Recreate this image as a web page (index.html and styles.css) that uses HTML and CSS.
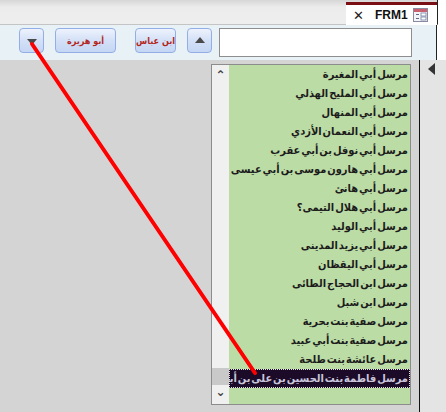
FILE: index.html
```html
<!DOCTYPE html>
<html lang="ar">
<head>
  <meta charset="UTF-8">
  <title>FRM1</title>
  <link rel="stylesheet" href="styles.css">
</head>
<body>
  <div class="header">
    <div class="tabbar">
      <div class="tab">
        <span class="tab-close">✕</span>
        <span class="tab-title">FRM1</span>
        <svg class="tab-icon" width="15" height="14" viewBox="0 0 15 14">
          <rect x="0.5" y="0.5" width="14" height="13" fill="#f4f4f8" stroke="#8a8aa0"/>
          <rect x="1" y="1" width="13" height="3" fill="#c86070"/>
          <rect x="3" y="6" width="3" height="1" fill="#606880"/>
          <rect x="8" y="5" width="5" height="3" fill="#fff" stroke="#7080a0" stroke-width="0.8"/>
          <rect x="3" y="10" width="3" height="1" fill="#606880"/>
          <rect x="8" y="9" width="5" height="3" fill="#fff" stroke="#7080a0" stroke-width="0.8"/>
        </svg>
      </div>
    </div>
    <div class="toolbar">
      <button class="btn btn-arrow" type="button"><span class="tri-down"></span></button>
      <button class="btn btn-name btn-abu" type="button">أبو هريرة</button>
      <button class="btn btn-name btn-ibn" type="button">ابن عباس</button>
      <button class="btn btn-arrow" type="button"><span class="tri-up"></span></button>
      <input class="search" type="text">
    </div>
  </div>

  <div class="main">
    <div class="canvas">
      <div class="listbox">
        <div class="scrollbar">
          <div class="sb-btn">&#8963;</div>
          <div class="sb-track"></div>
          <div class="sb-thumb"></div>
          <div class="sb-btn sb-down">&#8964;</div>
        </div>
        <ul class="items">
          <li>مرسل أبي المغيرة</li>
          <li>مرسل أبي المليح الهذلي</li>
          <li>مرسل أبي المنهال</li>
          <li>مرسل أبي النعمان الأزدي</li>
          <li>مرسل أبي نوفل بن أبي عقرب</li>
          <li>مرسل أبي هارون موسى بن أبي عيسى</li>
          <li>مرسل أبي هانئ</li>
          <li>مرسل أبي هلال التيمى؟</li>
          <li>مرسل أبي الوليد</li>
          <li>مرسل أبي يزيد المدينى</li>
          <li>مرسل أبي اليقظان</li>
          <li>مرسل ابن الحجاج الطائى</li>
          <li>مرسل ابن شبل</li>
          <li>مرسل صفية بنت بحرية</li>
          <li>مرسل صفية بنت أبي عبيد</li>
          <li>مرسل عائشة بنت طلحة</li>
          <li class="selected">مرسل فاطمة بنت الحسين بن على بن أبي طالب</li>
        </ul>
      </div>
    </div>
    <div class="divider"></div>
    <div class="side">
      <span class="tri-left"></span>
    </div>
  </div>

  <svg class="pointer" width="446" height="412" viewBox="0 0 446 412">
    <line x1="32" y1="44" x2="255" y2="373" stroke="#ff0000" stroke-width="4" stroke-linecap="round"/>
  </svg>
</body>
</html>
```

FILE: styles.css
```css
html, body { margin: 0; padding: 0; }
body { width: 446px; height: 412px; overflow: hidden; position: relative; background: #d4d4d4; font-family: "DejaVu Sans", sans-serif; }

.header { background: #fff; }
.tabbar { width: 437px; height: 24px; background: linear-gradient(#d6d6d6, #ececec 30%, #eeeeee); border-bottom: 1px solid #c4c4c4; border-right: 1px solid #222; display: flex; justify-content: flex-end; }
.tab { width: 91px; margin-top: 2px; height: 23px; background: #fff; border-top: 3px solid #7a1014; box-sizing: border-box; display: flex; align-items: center; padding-left: 7px; }
.tab-close { font-size: 13px; color: #222; width: 22px; font-family: "DejaVu Sans", sans-serif; }
.tab-title { font-family: "Liberation Sans", Arial, sans-serif; font-weight: bold; font-size: 12px; color: #111; width: 38px; }
.tab-icon { display: block; }

.toolbar { width: 437px; height: 35px; background: #e8f2f6; border-right: 1px solid #222; box-sizing: border-box; display: flex; align-items: flex-start; padding-top: 3px; }
.btn { height: 25px; margin: 0; padding: 0; border: 1px solid #93aee6; border-radius: 4px; background: linear-gradient(#eef3fc, #d3e0f7 50%, #c5d6f4); display: flex; align-items: center; justify-content: center; box-sizing: border-box; font-family: "DejaVu Sans Condensed", "DejaVu Sans", sans-serif; font-size: 9px; font-weight: bold; color: #b3261e; white-space: nowrap; }
.btn-arrow { width: 25px; }
.btn-name { direction: rtl; }
.toolbar .btn:first-child { margin-left: 19px; }
.btn-abu { width: 61px; margin-left: 11px; }
.btn-ibn { width: 41px; margin-left: 19px; }
.btn-ibn + .btn-arrow { margin-left: 11px; }
.tri-down { width: 0; height: 0; border-left: 5px solid transparent; border-right: 5px solid transparent; border-top: 6px solid #4a4a4a; margin-top: 2px; }
.tri-up { width: 0; height: 0; border-left: 5px solid transparent; border-right: 5px solid transparent; border-bottom: 6px solid #4a4a4a; margin-bottom: 2px; }
.search { width: 193px; height: 29px; margin-left: 7px; border: 1px solid #8e8e8e; background: #fff; box-sizing: border-box; padding: 0; }

.main { display: flex; height: 352px; }
.canvas { width: 419px; padding-top: 4px; box-sizing: border-box; }
.divider { width: 1px; background: #111; }
.side { flex: 1; background: #e4e4e4; display: flex; justify-content: center; align-items: flex-start; padding-top: 3px; }
.tri-left { width: 0; height: 0; border-top: 6px solid transparent; border-bottom: 6px solid transparent; border-right: 7px solid #333; margin-right: 4px; }

.listbox { margin-left: 211px; width: 200px; height: 341px; border: 1px solid #8c8c8c; box-sizing: border-box; display: flex; background: #bcdca6; }
.scrollbar { width: 17px; background: #f0f0f0; display: flex; flex-direction: column; }
.sb-btn { height: 17px; font-size: 12px; font-weight: bold; color: #444; text-align: center; line-height: 20px; }
.sb-down { line-height: 10px; }
.sb-track { flex: 1; }
.sb-thumb { height: 17px; background: #c9c9c9; margin-bottom: 2px; }

.items { flex: 1; margin: 0; padding: 0; list-style: none; direction: rtl; overflow: hidden; }
.items li { height: 19px; line-height: 19px; padding-right: 2px; font-family: "DejaVu Sans Condensed", "DejaVu Sans", sans-serif; font-size: 11px; font-weight: bold; word-spacing: -2.5px; color: #1c1c1c; white-space: nowrap; overflow: hidden; }
.items li.selected { background: #1b0b28; color: #c9c6dc; outline: 1px dotted #e0e0e0; outline-offset: -1px; }

.pointer { position: absolute; left: 0; top: 0; pointer-events: none; }
```
